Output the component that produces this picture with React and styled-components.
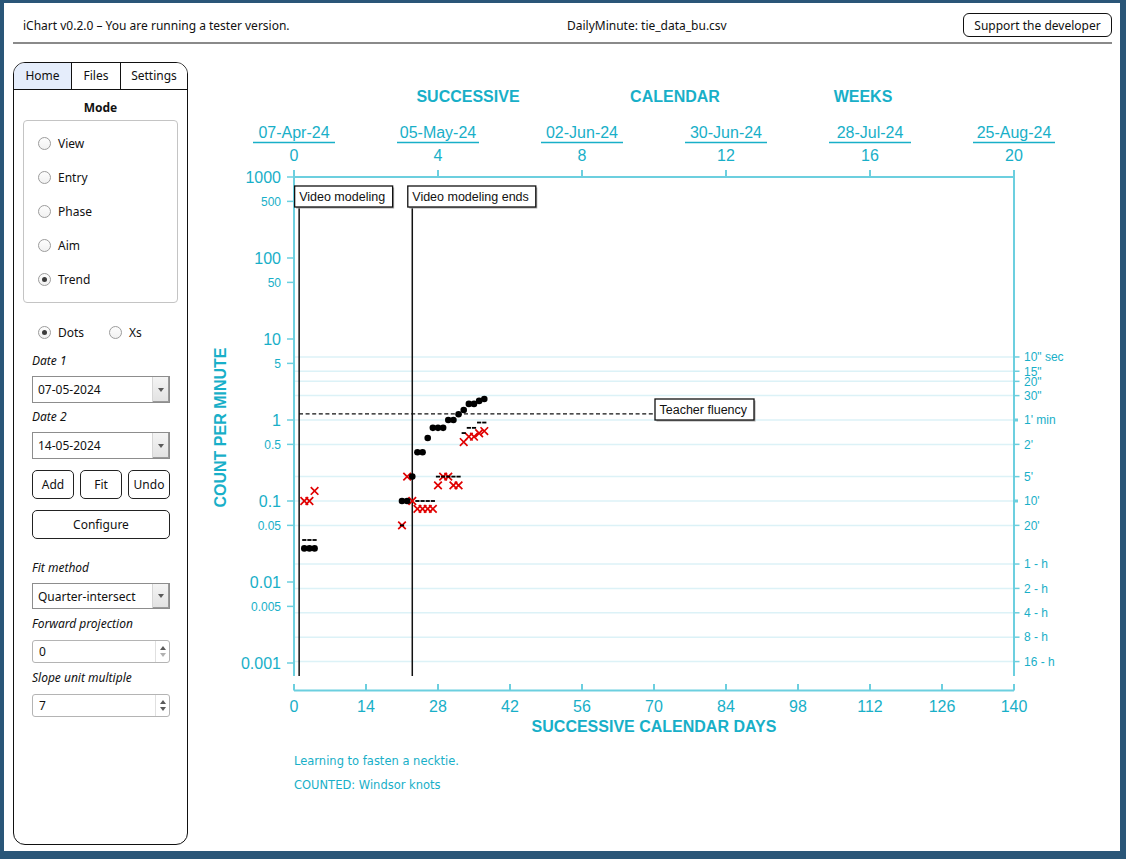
import React from "react";
import styled, { createGlobalStyle } from "styled-components";

const GlobalStyle = createGlobalStyle`
  html, body {
    margin: 0;
    padding: 0;
  }
  body {
    background: #2a5678;
    font-family: "Noto Sans", "Open Sans", sans-serif;
    font-size: 12px;
    color: #111;
  }
`;

// chart scale helpers
const X0 = 294;
const PX_DAY = 720 / 140;
const Y_TOP = 177;
const DECADE = 81;
const dx = (d) => X0 + d * PX_DAY;
const vy = (v) => Y_TOP + (3 - Math.log10(v)) * DECADE;

const CYAN_TEXT = "#18afc8";
const CYAN_LINE = "#6ccfdf";

const leftTicks = [
  [1000, "1000", true],
  [500, "500"],
  [100, "100", true],
  [50, "50"],
  [10, "10", true],
  [5, "5"],
  [1, "1", true],
  [0.5, "0.5"],
  [0.1, "0.1", true],
  [0.05, "0.05"],
  [0.01, "0.01", true],
  [0.005, "0.005"],
  [0.001, "0.001", true],
];

const rightTicks = [
  [6, '10" sec'],
  [4, '15"'],
  [3, '20"'],
  [2, '30"'],
  [1, "1' min", true],
  [0.5, "2'"],
  [0.2, "5'"],
  [0.1, "10'", true],
  [0.05, "20'"],
  [1 / 60, "1 - h"],
  [1 / 120, "2 - h"],
  [1 / 240, "4 - h"],
  [1 / 480, "8 - h"],
  [1 / 960, "16 - h"],
];

const weeks = [
  [0, "07-Apr-24"],
  [4, "05-May-24"],
  [8, "02-Jun-24"],
  [12, "30-Jun-24"],
  [16, "28-Jul-24"],
  [20, "25-Aug-24"],
];

const days = [0, 14, 28, 42, 56, 70, 84, 98, 112, 126, 140];

const dots = [
  [2, 0.026], [3, 0.026], [4, 0.026],
  [21, 0.1], [22, 0.1], [23, 0.2], [24, 0.4], [25, 0.4], [26, 0.6],
  [27, 0.8], [28, 0.8], [29, 0.8], [30, 1], [31, 1], [32, 1.18],
  [33, 1.33], [34, 1.58], [35, 1.58], [36, 1.72], [37, 1.82],
];

const crosses = [
  [2, 0.1], [3, 0.1], [4, 0.133],
  [21, 0.05], [22, 0.2], [23, 0.1], [24, 0.08], [25, 0.08], [26, 0.08],
  [27, 0.08], [28, 0.156], [29, 0.2], [30, 0.2], [31, 0.156], [32, 0.156],
  [33, 0.534], [34, 0.622], [35, 0.622], [36, 0.686], [37, 0.73],
];

const floors = [
  [2, 0.033], [3, 0.033], [4, 0.033], [21, 0.05],
  [24, 0.1], [25, 0.1], [26, 0.1], [27, 0.1],
  [28, 0.2], [29, 0.2], [30, 0.2], [31, 0.2], [32, 0.2],
  [33, 0.69], [34, 0.8], [35, 0.8], [36, 0.93], [37, 0.93],
];

const phases = [
  { day: 1, label: "Video modeling", width: 98 },
  { day: 23, label: "Video modeling ends", width: 128 },
];

const modes = ["View", "Entry", "Phase", "Aim", "Trend"];

/* ---------- page frame ---------- */

const Frame = styled.div`
  margin: 3px 6px 0 4px;
  width: 1116px;
  height: 848px;
  background: #fff;
  display: flex;
  flex-direction: column;
  overflow: hidden;
`;

const TopBar = styled.header`
  display: grid;
  grid-template-columns: 544px 1fr auto;
  align-items: center;
  height: 24px;
  margin-top: 10px;
  padding: 0 8px 0 19px;
  white-space: nowrap;
`;

const SupportButton = styled.button`
  width: 149px;
  height: 24px;
  padding: 0;
  border: 1px solid #111;
  border-radius: 6px;
  background: #fff;
  font-family: inherit;
  font-size: 12px;
  color: #111;
`;

const Rule = styled.div`
  margin: 5px 8px 0 9px;
  height: 2px;
  background: #8a8a8a;
`;

const Body = styled.div`
  display: flex;
  margin-top: 18px;
`;

/* ---------- sidebar ---------- */

const Sidebar = styled.aside`
  margin-left: 9px;
  width: 175px;
  height: 783px;
  box-sizing: border-box;
  border: 1px solid #111;
  border-radius: 12px;
  overflow: hidden;
  display: flex;
  flex-direction: column;
`;

const TabBar = styled.div`
  display: flex;
  flex: none;
  height: 26px;
  border-bottom: 1px solid #111;
`;

const Tab = styled.div`
  width: ${(p) => (p.$width ? `${p.$width}px` : "auto")};
  flex: ${(p) => (p.$width ? "none" : 1)};
  display: flex;
  align-items: center;
  justify-content: center;
  padding-bottom: 2px;
  border-right: ${(p) => (p.$last ? "none" : "1px solid #111")};
  background: ${(p) => (p.$active ? "#e5edfb" : "#fff")};
`;

const ModeTitle = styled.div`
  margin-top: 9px;
  height: 18px;
  line-height: 18px;
  text-align: center;
  font-weight: 700;
`;

const ModeBox = styled.div`
  margin: 3px 9px 0;
  height: 183px;
  flex: none;
  box-sizing: border-box;
  padding: 5px 0 6px;
  border: 1px solid #c4c4c4;
  border-radius: 4px;
`;

const RadioRow = styled.label`
  display: flex;
  align-items: center;
  gap: 7px;
  height: 34px;
  padding-left: 14px;
`;

const RadioItem = styled.label`
  display: flex;
  align-items: center;
  gap: 7px;
  width: ${(p) => (p.$width ? `${p.$width}px` : "auto")};
`;

const RadioCircle = styled.span`
  position: relative;
  width: 13px;
  height: 13px;
  box-sizing: border-box;
  border: 1px solid #9c9c9c;
  border-radius: 50%;
  background: linear-gradient(#fdfdfd, #f1f1f1);

  &::after {
    content: "";
    display: ${(p) => (p.$checked ? "block" : "none")};
    position: absolute;
    left: 3px;
    top: 3px;
    width: 5px;
    height: 5px;
    border-radius: 50%;
    background: #3c3c3c;
  }
`;

const Controls = styled.div`
  margin: 0 17px 0 18px;
  display: flex;
  flex-direction: column;
`;

const DotsRow = styled.div`
  display: flex;
  align-items: center;
  height: 34px;
  margin-top: 12px;
  padding-left: 6px;
`;

const FieldLabel = styled.div`
  margin-top: ${(p) => p.$gap}px;
  height: 18px;
  line-height: 18px;
  font-style: italic;
`;

const Combo = styled.div`
  margin-top: 6px;
  height: ${(p) => p.$height}px;
  box-sizing: border-box;
  display: flex;
  border: 1px solid #8d8d8d;
  background: #fff;
`;

const ComboValue = styled.span`
  flex: 1;
  display: flex;
  align-items: center;
  padding-left: 5px;
`;

const ComboArrow = styled.span`
  width: 16px;
  display: flex;
  align-items: center;
  justify-content: center;
  background: linear-gradient(#f4f4f4, #e2e2e2);
  border-left: 1px solid #d6d6d6;
  box-shadow: inset -1px -1px 0 #9a9a9a;

  &::after {
    content: "";
    border-left: 3.5px solid transparent;
    border-right: 3.5px solid transparent;
    border-top: 4px solid #5a5a5a;
  }
`;

const ButtonRow = styled.div`
  display: flex;
  gap: 6px;
  margin-top: 11px;
`;

const PanelButton = styled.button`
  flex: ${(p) => (p.$wide ? "none" : 1)};
  height: 29px;
  margin-top: ${(p) => p.$gap || 0}px;
  padding: 0;
  border: 1px solid #222;
  border-radius: 5px;
  background: #fff;
  font-family: inherit;
  font-size: 12px;
  color: #111;
`;

const Spin = styled.div`
  margin-top: 7px;
  height: 23px;
  box-sizing: border-box;
  display: flex;
  border: 1px solid #b4b4b4;
  border-radius: 3px;
  background: #fff;
`;

const SpinValue = styled.span`
  flex: 1;
  display: flex;
  align-items: center;
  padding-left: 6px;
`;

const SpinButtons = styled.span`
  width: 13px;
  display: flex;
  flex-direction: column;
  align-items: center;
  justify-content: center;
  gap: 3px;
  border-left: 1px solid #e0e0e0;
`;

const SpinArrow = styled.span`
  border-left: 3.5px solid transparent;
  border-right: 3.5px solid transparent;
  border-${(p) => (p.$up ? "bottom" : "top")}: 4px solid
    ${(p) => (p.$disabled ? "#b0b0b0" : "#5a5a5a")};
`;

/* ---------- chart ---------- */

const ChartArea = styled.main`
  flex: 1;
  height: 783px;
`;

const ChartSvg = styled.svg`
  display: block;
`;

const ChartText = styled.text`
  font-family: "Liberation Sans", Arial, sans-serif;
  font-size: ${(p) => p.$size || 16}px;
  font-weight: ${(p) => (p.$bold ? 700 : 400)};
  fill: ${CYAN_TEXT};
`;

const NoteText = styled.text`
  font-family: "DejaVu Sans", sans-serif;
  font-size: 11.5px;
  fill: ${CYAN_TEXT};
`;

const AxisLine = styled.line`
  stroke: ${(p) => p.$color || CYAN_LINE};
  stroke-width: ${(p) => p.$w || 2};
`;

const GridLine = styled.line`
  stroke: #dcf2f7;
  stroke-width: 1.5;
`;

const PhaseLine = styled.line`
  stroke: #111;
  stroke-width: 1.5;
`;

const AimLine = styled.line`
  stroke: #111;
  stroke-width: 1.3;
  stroke-dasharray: 4 2.6;
`;

const BoxShadow = styled.rect`
  fill: #a8a8a8;
`;

const Box = styled.rect`
  fill: #fff;
  stroke: #111;
  stroke-width: 1.3;
`;

const BoxText = styled.text`
  font-family: "Liberation Sans", Arial, sans-serif;
  font-size: 12.5px;
  fill: #111;
`;

const Dot = styled.circle`
  fill: #000;
`;

const Cross = styled.path`
  fill: none;
  stroke: #e00000;
  stroke-width: 1.7;
`;

const Floor = styled.rect`
  fill: #000;
`;

const NoteBox = ({ x, y, width, label }) => (
  <g>
    <BoxShadow x={x + 1.5} y={y + 1.5} width={width} height={21} />
    <Box x={x} y={y} width={width} height={21} />
    <BoxText x={x + 4.5} y={y + 14.5}>
      {label}
    </BoxText>
  </g>
);

const Chart = () => {
  const bottom = 676;
  const h = 3.8;
  return (
    <ChartSvg width="924" height="783" viewBox="188 62 924 783">
      {/* grid */}
      {rightTicks.map(([v]) => (
        <GridLine key={v} x1={X0} x2={1014} y1={vy(v)} y2={vy(v)} />
      ))}

      {/* titles */}
      <ChartText $bold x={468} y={102} textAnchor="middle">
        SUCCESSIVE
      </ChartText>
      <ChartText $bold x={675} y={102} textAnchor="middle">
        CALENDAR
      </ChartText>
      <ChartText $bold x={863} y={102} textAnchor="middle">
        WEEKS
      </ChartText>

      {/* top axis */}
      {weeks.map(([w, date]) => {
        const x = dx(w * 7);
        return (
          <g key={w}>
            <ChartText x={x} y={137.5} textAnchor="middle">
              {date}
            </ChartText>
            <AxisLine $w={1.3} $color={CYAN_TEXT} x1={x - 41} x2={x + 41} y1={142.5} y2={142.5} />
            <ChartText x={x} y={161} textAnchor="middle">
              {w}
            </ChartText>
            <AxisLine x1={x} x2={x} y1={170} y2={177} />
          </g>
        );
      })}
      <AxisLine x1={X0} x2={1014} y1={Y_TOP} y2={Y_TOP} />

      {/* left axis */}
      <AxisLine x1={X0} x2={X0} y1={170} y2={bottom} />
      {leftTicks.map(([v, label, big]) => (
        <g key={label}>
          <AxisLine $w={1.5} x1={287} x2={X0} y1={vy(v)} y2={vy(v)} />
          <ChartText
            $size={big ? 16 : 12}
            x={281}
            y={vy(v) + (big ? 6 : 4.3)}
            textAnchor="end"
          >
            {label}
          </ChartText>
        </g>
      ))}
      <ChartText
        $bold
        transform="translate(225.7 427.5) rotate(-90)"
        textAnchor="middle"
      >
        COUNT PER MINUTE
      </ChartText>

      {/* right axis */}
      <AxisLine x1={1014} x2={1014} y1={170} y2={bottom} />
      {rightTicks.map(([v, label, major]) => (
        <g key={label}>
          <AxisLine $w={major ? 3 : 1.5} x1={1014} x2={major ? 1018 : 1019.5} y1={vy(v)} y2={vy(v)} />
          <ChartText $size={12} x={1024} y={vy(v) + 4.3}>
            {label}
          </ChartText>
        </g>
      ))}

      {/* bottom axis */}
      <AxisLine x1={X0} x2={1014} y1={690.5} y2={690.5} />
      {days.map((d) => (
        <g key={d}>
          <AxisLine x1={dx(d)} x2={dx(d)} y1={684} y2={690.5} />
          <ChartText x={dx(d)} y={711.5} textAnchor="middle">
            {d}
          </ChartText>
        </g>
      ))}
      <ChartText $bold x={654} y={731.7} textAnchor="middle">
        SUCCESSIVE CALENDAR DAYS
      </ChartText>

      {/* phase lines */}
      {phases.map((p) => (
        <PhaseLine key={p.day} x1={dx(p.day)} x2={dx(p.day)} y1={207} y2={bottom} />
      ))}

      {/* aim */}
      <AimLine x1={299} x2={655} y1={vy(1.19)} y2={vy(1.19)} />

      {/* data */}
      {crosses.map(([d, v]) => {
        const x = dx(d);
        const y = vy(v);
        return (
          <Cross
            key={`x${d}`}
            d={`M${x - h} ${y - h}L${x + h} ${y + h}M${x + h} ${y - h}L${x - h} ${y + h}`}
          />
        );
      })}
      {dots.map(([d, v]) => (
        <Dot key={`d${d}`} cx={dx(d)} cy={vy(v)} r={3.3} />
      ))}
      {floors.map(([d, v]) => (
        <Floor key={`f${d}`} x={dx(d) - 2.1} y={vy(v) - 0.9} width={4.2} height={1.8} />
      ))}

      {/* labels */}
      {phases.map((p) => (
        <NoteBox key={p.label} x={dx(p.day) - 4.5} y={186} width={p.width} label={p.label} />
      ))}
      <NoteBox x={655} y={399} width={99} label="Teacher fluency" />

      <NoteText x={294} y={765}>
        Learning to fasten a necktie.
      </NoteText>
      <NoteText x={294} y={789}>
        COUNTED: Windsor knots
      </NoteText>
    </ChartSvg>
  );
};

const App = () => {
  return (
    <>
      <GlobalStyle />
      <Frame>
        <TopBar>
          <span>iChart v0.2.0 – You are running a tester version.</span>
          <span>DailyMinute: tie_data_bu.csv</span>
          <SupportButton>Support the developer</SupportButton>
        </TopBar>
        <Rule />
        <Body>
          <Sidebar>
            <TabBar>
              <Tab $width={57} $active>
                Home
              </Tab>
              <Tab $width={48}>Files</Tab>
              <Tab $last>Settings</Tab>
            </TabBar>

            <ModeTitle>Mode</ModeTitle>
            <ModeBox>
              {modes.map((m) => (
                <RadioRow key={m}>
                  <RadioCircle $checked={m === "Trend"} />
                  {m}
                </RadioRow>
              ))}
            </ModeBox>

            <Controls>
              <DotsRow>
                <RadioItem $width={71}>
                  <RadioCircle $checked />
                  Dots
                </RadioItem>
                <RadioItem>
                  <RadioCircle />
                  Xs
                </RadioItem>
              </DotsRow>

              <FieldLabel $gap={3}>Date 1</FieldLabel>
              <Combo $height={27}>
                <ComboValue>07-05-2024</ComboValue>
                <ComboArrow />
              </Combo>

              <FieldLabel $gap={5}>Date 2</FieldLabel>
              <Combo $height={27}>
                <ComboValue>14-05-2024</ComboValue>
                <ComboArrow />
              </Combo>

              <ButtonRow>
                <PanelButton>Add</PanelButton>
                <PanelButton>Fit</PanelButton>
                <PanelButton>Undo</PanelButton>
              </ButtonRow>
              <PanelButton $wide $gap={11}>
                Configure
              </PanelButton>

              <FieldLabel $gap={20}>Fit method</FieldLabel>
              <Combo $height={26}>
                <ComboValue>Quarter-intersect</ComboValue>
                <ComboArrow />
              </Combo>

              <FieldLabel $gap={6}>Forward projection</FieldLabel>
              <Spin>
                <SpinValue>0</SpinValue>
                <SpinButtons>
                  <SpinArrow $up />
                  <SpinArrow $disabled />
                </SpinButtons>
              </Spin>

              <FieldLabel $gap={6}>Slope unit multiple</FieldLabel>
              <Spin>
                <SpinValue>7</SpinValue>
                <SpinButtons>
                  <SpinArrow $up />
                  <SpinArrow />
                </SpinButtons>
              </Spin>
            </Controls>
          </Sidebar>

          <ChartArea>
            <Chart />
          </ChartArea>
        </Body>
      </Frame>
    </>
  );
};

export default App;
